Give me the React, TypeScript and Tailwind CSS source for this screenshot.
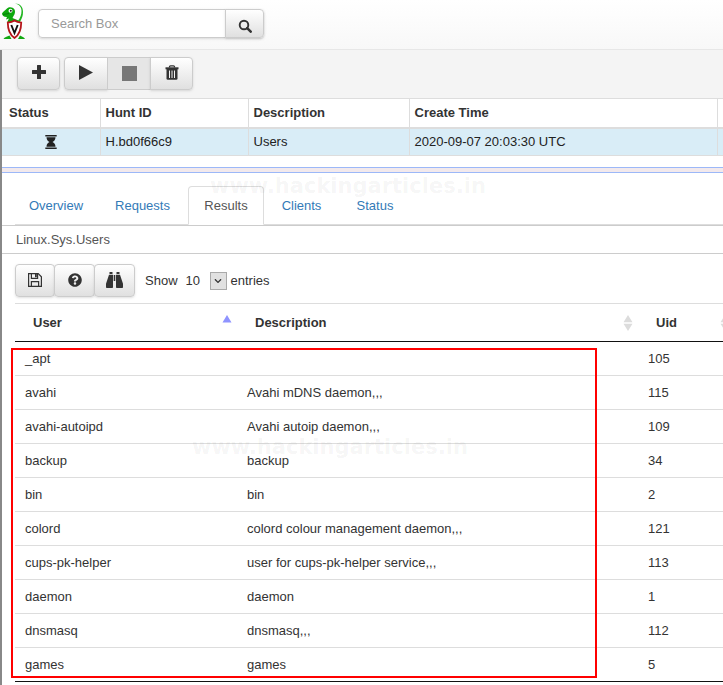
import React from 'react'
import { FaQuestionCircle, FaChevronDown } from 'react-icons/fa'
import clsx from 'clsx'

interface UserRow {
  user: string
  description: string
  uid: number
}

const users: UserRow[] = [
  { user: '_apt', description: '', uid: 105 },
  { user: 'avahi', description: 'Avahi mDNS daemon,,,', uid: 115 },
  { user: 'avahi-autoipd', description: 'Avahi autoip daemon,,,', uid: 109 },
  { user: 'backup', description: 'backup', uid: 34 },
  { user: 'bin', description: 'bin', uid: 2 },
  { user: 'colord', description: 'colord colour management daemon,,,', uid: 121 },
  { user: 'cups-pk-helper', description: 'user for cups-pk-helper service,,,', uid: 113 },
  { user: 'daemon', description: 'daemon', uid: 1 },
  { user: 'dnsmasq', description: 'dnsmasq,,,', uid: 112 },
  { user: 'games', description: 'games', uid: 5 },
]

const tabs = [
  { name: 'Overview', width: 'w-[82px]' },
  { name: 'Requests', width: 'w-[91px]' },
  { name: 'Results', width: 'w-[76px]' },
  { name: 'Clients', width: 'w-[75px]' },
  { name: 'Status', width: 'w-[72px]' },
]

function Logo() {
  return (
    <svg viewBox="0 0 28 42" className="h-[42px] w-7 shrink-0" aria-label="Velociraptor" role="img">
      <path
        d="M13 2.500c5 0 8 3 8 8.500 0 4-1 6-3 10l-2.500-.500c3-4 4-7 4-10.500 0-4-2-6.500-6.500-7.500z"
        fill="#1fb41f"
      />
      <path d="M0 12.500C1 10 4 9 5 7.500 7 5.500 11 6 12.500 8.500c1 2 .500 4.500-1 6.500l-1 2 6 2.500-2 2H5l2-4-3 1 1-2.500c-3 .200-5-1.500-5-3.500z" fill="#0ca80c" />
      <path d="M1 13.500l6-1" stroke="#067006" strokeWidth=".8" />
      <circle cx="8.500" cy="9.800" r="2" fill="#fff" />
      <circle cx="8.800" cy="9.800" r="1" fill="#222" />
      <path d="M1.500 38c1-2 3.500-2.500 6-3.500L9.500 38zM23 38c-1-2-3-2.500-5-3.500L16 38z" fill="#12a812" />
      <path
        d="M12.500 19.500c2 1.500 4 2 6.700 2.200 0 6.500-1.200 11.500-6.700 15.300C7 33.200 5.800 28.200 5.800 21.700c2.700-.200 4.700-.700 6.700-2.200z"
        fill="#fff"
        stroke="#b5161b"
        strokeWidth="1.800"
      />
      <path d="M9.300 24l3.200 8 3.200-8" fill="none" stroke="#111" strokeWidth="1.900" />
    </svg>
  )
}

function SearchIcon() {
  return (
    <svg viewBox="0 0 14 14" className="size-[14px]" fill="none" stroke="currentColor" aria-hidden="true">
      <circle cx="6" cy="6" r="4.300" strokeWidth="1.900" />
      <path d="M9.200 9.200l3.500 3.500" strokeWidth="2.500" strokeLinecap="round" />
    </svg>
  )
}

function PlusIcon() {
  return (
    <svg viewBox="0 0 14 14" className="size-[14px]" fill="currentColor" aria-hidden="true">
      <path d="M5.500 0h3q.500 0 .500.500V5h4.500q.500 0 .500.500v3q0 .500-.500.500H9v4.500q0 .500-.500.500h-3q-.500 0-.500-.500V9H.500Q0 9 0 8.500v-3Q0 5 .500 5H5V.500Q5 0 5.500 0z" />
    </svg>
  )
}

function PlayIcon() {
  return (
    <svg viewBox="0 0 14 15" className="h-[15px] w-[14px]" fill="currentColor" aria-hidden="true">
      <path d="M0 0l14 7.500L0 15z" />
    </svg>
  )
}

function StopIcon() {
  return (
    <svg viewBox="0 0 15 15" className="size-[15px]" fill="currentColor" aria-hidden="true">
      <path d="M0 0h15v15H0z" />
    </svg>
  )
}

function TrashIcon() {
  return (
    <svg viewBox="0 0 14 15" className="h-[15px] w-[14px]" aria-hidden="true">
      <path d="M4.500 2.500V1.800q0-1 1-1h3q1 0 1 1v.7" fill="none" stroke="currentColor" strokeWidth="1.300" />
      <path d="M.5 2.300h13v2H.5z" fill="currentColor" />
      <path d="M1.500 4h11v9.500q0 1.300-1.300 1.300H2.800q-1.300 0-1.300-1.300z" fill="currentColor" />
      <path d="M4.500 5.500v7.500M7 5.500v7.500M9.500 5.500v7.500" stroke="#f3f3f3" strokeWidth="1" />
    </svg>
  )
}

function HourglassIcon() {
  return (
    <svg viewBox="0 0 12 14" className="mx-auto h-[14px] w-3" fill="currentColor" role="img" aria-label="Running">
      <path d="M.3 0h11.400v1.600H.3zM.3 12.400h11.400V14H.3zM1.500 2.300h9c0 2.300-1.300 3.800-3 4.700 1.700.900 3 2.400 3 4.700h-9c0-2.300 1.300-3.800 3-4.700-1.700-.900-3-2.400-3-4.700z" />
    </svg>
  )
}

function FloppyIcon() {
  return (
    <svg viewBox="0 0 14 14" className="size-[14px]" fill="none" stroke="currentColor" aria-hidden="true">
      <path d="M.600.600h9.600l3.200 3.200v9.600H.600z" strokeWidth="1.200" />
      <path d="M3.400 13V8.700h7.200V13" strokeWidth="1.200" />
      <path d="M3.400.800v4.500h6.200V.800" strokeWidth="1.200" />
      <path d="M7 1h1.800v3.300H7z" fill="currentColor" stroke="none" />
    </svg>
  )
}

function BinocularsIcon() {
  return (
    <svg viewBox="0 0 17 16" className="h-4 w-[17px]" fill="currentColor" aria-hidden="true">
      <path d="M3.500 0h3v2h-3zM10.500 0h3v2h-3zM3 2.700h4v12.500q0 .800-.800.800H.800Q0 16 0 15.200v-3.500zM14 2.700h-4v12.500q0 .800.800.800h5.400q.800 0 .800-.800v-3.500zM7.700 3h1.600v6H7.700z" />
    </svg>
  )
}

interface ToolButtonProps extends React.ButtonHTMLAttributes<HTMLButtonElement> {
  label: string
}

function ToolButton({ label, className, children, ...rest }: ToolButtonProps) {
  return (
    <button
      type="button"
      aria-label={label}
      className={clsx(
        'flex items-center justify-center border border-[#ccc] bg-linear-to-b from-white to-[#e0e0e0] text-[#333] shadow-sm disabled:bg-none disabled:bg-[#e6e6e6] disabled:text-[#777] disabled:shadow-none',
        className
      )}
      {...rest}
    >
      {children}
    </button>
  )
}

function SortArrows({ sorted = false }: { sorted?: boolean }) {
  return (
    <svg viewBox="0 0 10 16" className="h-4 w-[10px] shrink-0" aria-hidden="true">
      {sorted ? (
        <path d="M5 0l4.500 7.500h-9z" fill="#8f94ff" />
      ) : (
        <path d="M5 0l4.500 7.300h-9zM.5 8.700h9L5 16z" fill="#dcdcdc" />
      )}
    </svg>
  )
}

function Watermark({ className }: { className: string }) {
  return (
    <div
      aria-hidden="true"
      className={clsx(
        "pointer-events-none absolute font-['DejaVu_Sans',sans-serif] text-[21px] leading-6 font-bold whitespace-nowrap text-black/5",
        className
      )}
    >
      www.hackingarticles.in
    </div>
  )
}

export default function App() {
  return (
    <div className="min-h-screen overflow-hidden bg-white font-['Liberation_Sans',Arial,sans-serif] text-[13px] leading-5 text-[#333]">
      <header className="flex h-[50px] items-start border-b border-[#e7e7e7] bg-linear-to-b from-white to-[#f8f8f8] pt-px pl-[2px]">
        <Logo />
        <form className="mt-2 ml-2 flex h-[29px] rounded shadow-sm" onSubmit={(e) => e.preventDefault()}>
          <input
            type="text"
            aria-label="Search Box"
            placeholder="Search Box"
            className="w-[188px] rounded-l border border-[#ccc] bg-white px-3 outline-none placeholder:text-[#999]"
          />
          <ToolButton label="Search" className="-ml-px w-[39px] rounded-r pt-1">
            <SearchIcon />
          </ToolButton>
        </form>
      </header>

      <main className="min-h-[calc(100vh-50px)] border-l-2 border-[#888]">
        <div className="flex h-12 items-center gap-1 bg-[#f4f4f4] pb-[2px] pl-[15px]">
          <ToolButton label="New hunt" className="h-[33px] w-[43px] rounded pb-[2px]">
            <PlusIcon />
          </ToolButton>
          <div className="flex">
            <ToolButton label="Run hunt" className="h-[33px] w-11 rounded-l pb-px">
              <PlayIcon />
            </ToolButton>
            <ToolButton label="Stop hunt" disabled className="-ml-px h-[33px] w-11">
              <StopIcon />
            </ToolButton>
            <ToolButton label="Delete hunt" className="-ml-px h-[33px] w-[43px] rounded-r pb-px">
              <TrashIcon />
            </ToolButton>
          </div>
        </div>

        <table className="w-full table-fixed border-collapse border-y border-[#ddd] text-left">
          <colgroup>
            <col className="w-[98px]" />
            <col className="w-[148px]" />
            <col className="w-[161px]" />
            <col />
            <col className="w-[6px]" />
          </colgroup>
          <thead>
            <tr className="h-[29px] border-b-2 border-[#ddd]">
              <th className="border-r border-[#ddd] pl-[7px]">Status</th>
              <th className="border-r border-[#ddd] pl-[5px]">Hunt ID</th>
              <th className="border-r border-[#ddd] pl-[5px]">Description</th>
              <th className="border-r border-[#ddd] pl-[5px]">Create Time</th>
              <td />
            </tr>
          </thead>
          <tbody>
            <tr className="h-7 bg-[#d9edf7] text-[#222]">
              <td className="border-r border-[#ddd]">
                <HourglassIcon />
              </td>
              <td className="border-r border-[#ddd] pl-[5px]">H.bd0f66c9</td>
              <td className="border-r border-[#ddd] pl-[5px]">Users</td>
              <td className="border-r border-[#ddd] pl-[5px]">2020-09-07 20:03:30 UTC</td>
              <td />
            </tr>
          </tbody>
        </table>

        <div className="mt-[11px] h-[6px] border-y border-[#9cb8f8] bg-[#f2e9ec]" />

        {/* Hunt details */}
        <section className="relative">
          <Watermark className="top-px left-[208px]" />
          <nav className="ml-[13px] flex border-b border-[#ddd] pt-[13px]">
            {tabs.map(({ name, width }) => (
              <a
                key={name}
                href={`#${name.toLowerCase()}`}
                className={clsx(
                  '-mb-px flex h-[39px] items-center justify-center rounded-t border',
                  width,
                  name === 'Results' ? 'border-[#ddd] border-b-white text-[#555]' : 'border-transparent text-[#337ab7]'
                )}
              >
                {name}
              </a>
            ))}
          </nav>
          <div className="border-y border-[#ccc] pt-1 pb-[3px] pl-[14px] text-[#555]">Linux.Sys.Users</div>

          <div className="relative ml-[13px] pt-[10px]">
            <div className="flex items-center pb-[6px]">
              <div className="flex">
                <ToolButton label="Save" className="h-[33px] w-10 rounded pb-[2px]">
                  <FloppyIcon />
                </ToolButton>
                <ToolButton label="Help" className="-ml-px h-[33px] w-[41px] rounded pb-[2px]">
                  <FaQuestionCircle className="size-[14px]" />
                </ToolButton>
                <ToolButton label="Inspect" className="-ml-px h-[33px] w-[41px] rounded pb-[2px]">
                  <BinocularsIcon />
                </ToolButton>
              </div>
              <label className="ml-[10px] flex items-center">
                Show
                <span className="relative mr-1 ml-1 flex items-center">
                  <select className="w-[45px] appearance-none pl-1 outline-none" defaultValue="10">
                    <option>10</option>
                    <option>25</option>
                    <option>50</option>
                  </select>
                  <span className="pointer-events-none absolute right-0 flex h-[18px] w-[17px] items-center justify-center border border-[#aaa] bg-[#e1e1e1]">
                    <FaChevronDown className="size-2" />
                  </span>
                </span>
                entries
              </label>
            </div>

            <div className="overflow-hidden">
              <table className="w-[calc(100%+12px)] table-fixed border-collapse border-t border-b border-t-[#ddd] border-b-[#111] text-left">
                <colgroup>
                  <col className="w-[222px]" />
                  <col />
                  <col className="w-[97px]" />
                </colgroup>
                <thead>
                  <tr className="h-[38px] border-b border-[#111]">
                    {['User', 'Description', 'Uid'].map((name) => (
                      <th key={name} className="pr-[5px] pl-[18px]">
                        <div className="flex items-center justify-between">
                          {name}
                          <SortArrows sorted={name === 'User'} />
                        </div>
                      </th>
                    ))}
                  </tr>
                </thead>
                <tbody>
                  {users.map((row) => (
                    <tr key={row.user} className="h-[34px] not-first:border-t not-first:border-[#ddd]">
                      <td className="pl-[10px]">{row.user}</td>
                      <td className="pl-[10px]">{row.description}</td>
                      <td className="pl-[10px]">{row.uid}</td>
                    </tr>
                  ))}
                </tbody>
              </table>
            </div>
            <Watermark className="top-[181px] left-[177px]" />
            {/* Highlight around the account names */}
            <div className="pointer-events-none absolute top-[94px] right-[126px] bottom-[4px] -left-1 border-2 border-[#f00]" />
          </div>
        </section>
      </main>
    </div>
  )
}
